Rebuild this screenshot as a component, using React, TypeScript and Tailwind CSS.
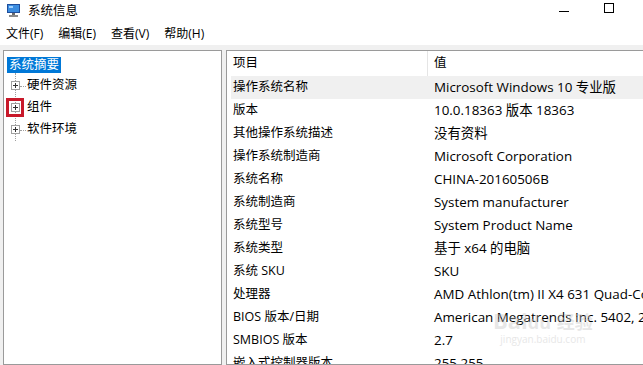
const font = { fontFamily: '"Open Sans", "Noto Sans CJK SC", sans-serif' };

const rows: [string, string][] = [
  ["操作系统名称", "Microsoft Windows 10 专业版"],
  ["版本", "10.0.18363 版本 18363"],
  ["其他操作系统描述", "没有资料"],
  ["操作系统制造商", "Microsoft Corporation"],
  ["系统名称", "CHINA-20160506B"],
  ["系统制造商", "System manufacturer"],
  ["系统型号", "System Product Name"],
  ["系统类型", "基于 x64 的电脑"],
  ["系统 SKU", "SKU"],
  ["处理器", "AMD Athlon(tm) II X4 631 Quad-Core Processor"],
  ["BIOS 版本/日期", "American Megatrends Inc. 5402, 2013/7/15"],
  ["SMBIOS 版本", "2.7"],
  ["嵌入式控制器版本", "255.255"],
];

function AppIcon() {
  return (
    <svg width="16" height="16" viewBox="0 0 16 16">
      <rect x="1" y="2" width="13" height="9" fill="#1f4e9c" />
      <rect x="2" y="3" width="11" height="7" fill="#3b8de0" />
      <path d="M3 4h4v2H3z" fill="#9fd0ff" />
      <rect x="6" y="11" width="3" height="2" fill="#6b6b6b" />
      <rect x="3" y="13" width="9" height="2" fill="#8a8a8a" />
    </svg>
  );
}

function PlusBox() {
  return (
    <svg width="9" height="9" viewBox="0 0 9 9" className="relative shrink-0">
      <rect x="0.5" y="0.5" width="8" height="8" fill="#fff" stroke="#a0a0a0" />
      <path d="M2 4.5h5M4.5 2v5" stroke="#333" />
    </svg>
  );
}

function TreeItem({ label, boxed }: { label: string; boxed?: boolean }) {
  return (
    <div className="relative flex h-[22px] items-center">
      {!boxed && <div className="absolute left-[14px] top-[11px] w-[6px] border-t border-dotted border-[#a0a0a0]" />}
      <div className="relative flex h-[19px] w-[18px] items-center justify-center">
        {boxed && <div className="absolute inset-0 border-[3px] border-[#c8192a]" />}
        <PlusBox />
      </div>
      <span className="ml-[3px] text-[12.5px]">{label}</span>
    </div>
  );
}

export default function App() {
  return (
    <div className="h-[365px] w-[643px] overflow-hidden bg-white text-[13px] text-black" style={font}>
      {/* title bar */}
      <div className="flex h-[22px] items-center">
        <div className="ml-[6px] mt-[-2px]">
          <AppIcon />
        </div>
        <span className="ml-[6px] text-[12.5px]">系统信息</span>
        <div className="ml-auto flex items-center">
          <div className="mr-[35px] h-px w-[10px] bg-black" />
          <div className="mr-[29px] mb-[6px] h-[10px] w-[10px] border border-black" />
        </div>
      </div>
      {/* menu */}
      <div className="flex h-[23px] items-center gap-[15px] pl-[6px] text-[12px]">
        <span>文件(F)</span>
        <span>编辑(E)</span>
        <span>查看(V)</span>
        <span>帮助(H)</span>
      </div>
      {/* body */}
      <div className="flex h-[320px] gap-[4px] bg-[#f0f0f0] pl-[3px] pt-[5px]">
        <div className="w-[219px] shrink-0 border border-[#9a9a9a] bg-white pl-[2px] pt-[4px]">
          <div className="ml-[1px] inline-block bg-[#0078d7] px-[2px] text-[12.5px] leading-[16px] text-white">系统摘要</div>
          <div className="relative">
            <div className="absolute left-[9px] top-[-2px] h-[68px] border-l border-dotted border-[#a0a0a0]" />
            <TreeItem label="硬件资源" />
            <TreeItem label="组件" boxed />
            <TreeItem label="软件环境" />
          </div>
        </div>
        <div className="relative min-w-0 flex-1 overflow-hidden border border-r-0 border-[#9a9a9a] bg-white pl-[4px]">
          <div className="flex h-[25px] items-center">
            <div className="flex h-full w-[197px] shrink-0 items-center border-r border-[#e5e5e5] pl-[2px] text-[12.5px]">项目</div>
            <div className="pl-[6px] text-[12.5px]">值</div>
          </div>
          {rows.map(([k, v], i) => (
            <div key={k} className={`flex h-[23px] items-center whitespace-nowrap ${i === 0 ? "bg-[#f0f0f0]" : ""}`}>
              <div className="w-[197px] shrink-0 pl-[2px] text-[12.5px]">{k}</div>
              <div className="shrink-0 pl-[6px] text-[13.4px]">{v}</div>
            </div>
          ))}
          <div className="pointer-events-none absolute left-[266px] top-[258px] whitespace-nowrap text-center leading-none text-[#c4c4c4] opacity-40">
            <div className="text-[22px] font-bold">
              Bai<span className="text-[18px]">du</span> <span className="text-[18px]">经验</span>
            </div>
            <div className="mt-[3px] text-[10px]">jingyan.baidu.com</div>
          </div>
        </div>
      </div>
    </div>
  );
}
